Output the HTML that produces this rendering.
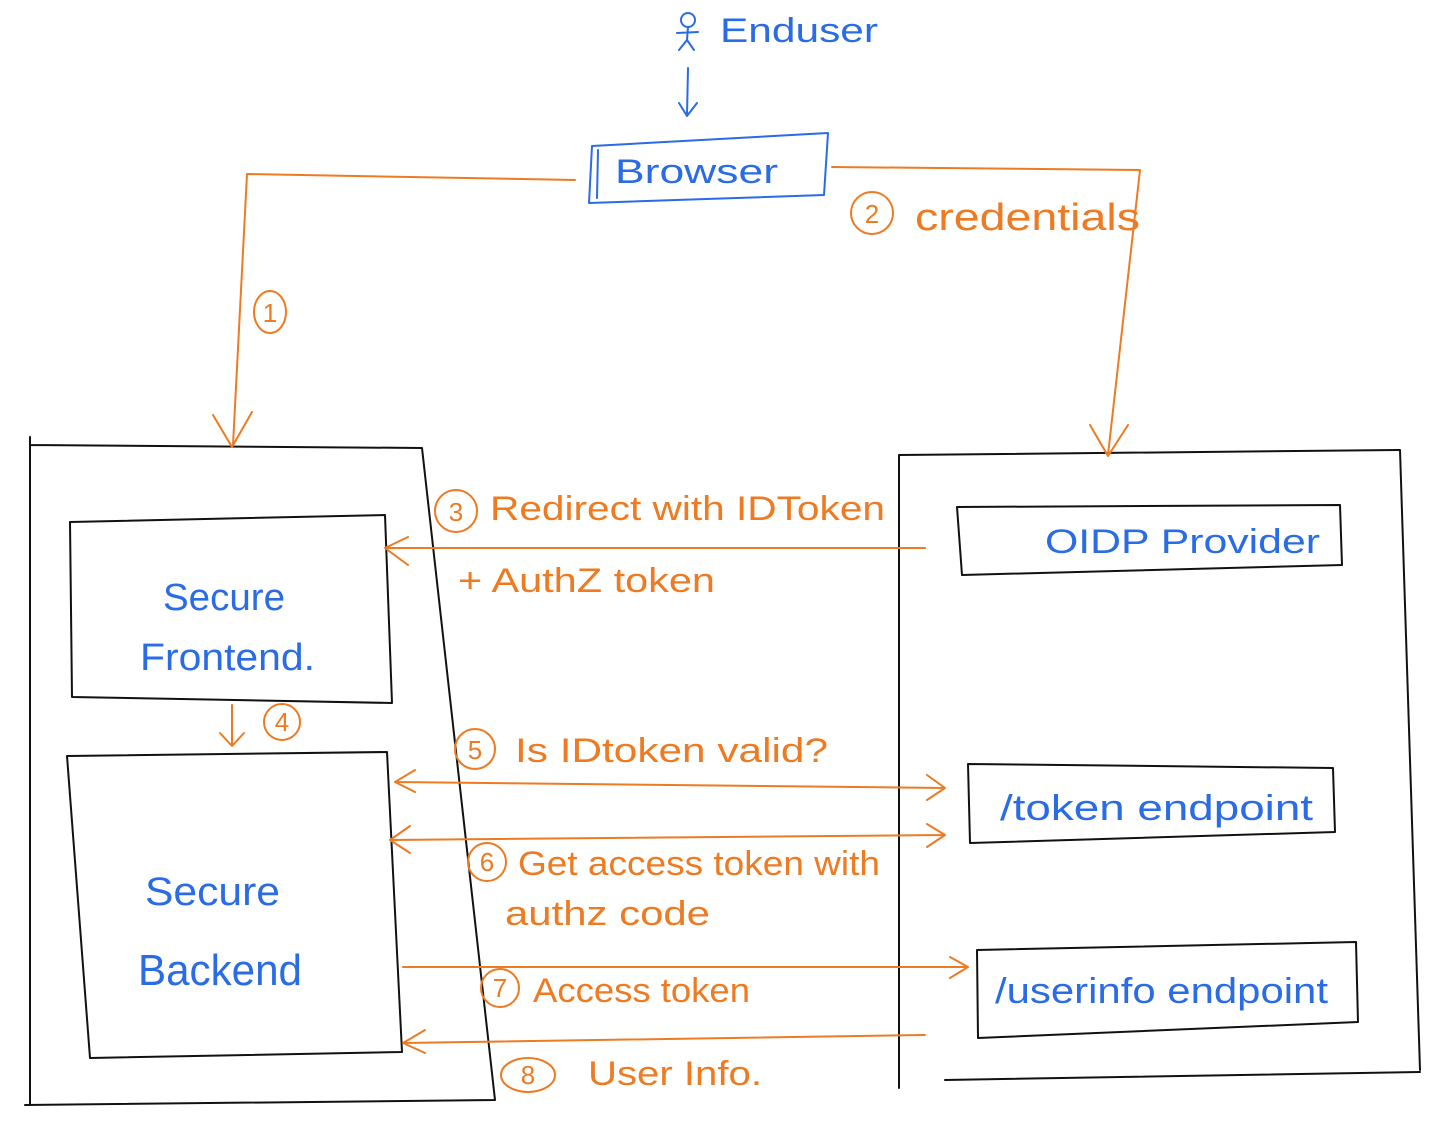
<!DOCTYPE html>
<html><head><meta charset="utf-8"><style>
html,body{margin:0;padding:0;background:#fff;}
svg{display:block;}
text{font-family:"Liberation Sans",sans-serif;}
.b{fill:#2a6be6;}
.o{fill:#ee7a22;}
</style></head><body>
<svg width="1430" height="1121" viewBox="0 0 1430 1121" xmlns="http://www.w3.org/2000/svg">
<g fill="none" stroke-linecap="round" stroke-linejoin="round">
<g stroke="#2a6be6" stroke-width="2">
<circle cx="688" cy="20" r="7"/>
<path d="M688 27 L687 40 M677 33 L698 32 M687 40 L679 50 M687 40 L694 50"/>
<path d="M688 68 L687 115 M679 103 L687 116 L697 103"/>
<path d="M592 146 L828 133 L824 195 L589 203 Z M598 150 L597 198"/>
</g>
<g stroke="#111" stroke-width="2">
<path d="M30 437 L30 1105 M30 445 L422 448 L495 1100 M25 1105 L495 1100"/>
<path d="M70 522 L385 515 L392 703 L72 697 Z"/>
<path d="M67 756 L387 752 L402 1052 L90 1058 Z"/>
<path d="M899 455 L899 1088 M899 455 L1400 450 L1420 1070 M945 1080 L1420 1072"/>
<path d="M957 507 L1340 505 L1342 565 L962 575 Z"/>
<path d="M968 764 L1333 768 L1335 832 L970 843 Z"/>
<path d="M977 950 L1356 942 L1358 1022 L978 1038 Z"/>
</g>
<g stroke="#ee7a22" stroke-width="2">
<path d="M575 180 L247 174 L233 445 M213 415 L232 447 L252 412"/>
<path d="M832 167 L1140 170 L1108 455 M1090 425 L1108 456 L1128 425"/>
<path d="M232 705 L232 745 M220 733 L232 746 L244 733"/>
<path d="M925 548 L385 548 M408 537 L385 548 L408 565"/>
<path d="M395 782 L945 788 M415 770 L395 782 L415 792 M927 775 L945 788 L927 800"/>
<path d="M390 840 L945 835 M410 826 L390 840 L410 853 M927 824 L945 835 L927 847"/>
<path d="M403 967 L968 967 M950 957 L968 967 L950 978"/>
<path d="M925 1035 L403 1043 M425 1030 L403 1043 L425 1053"/>
<ellipse cx="270" cy="312" rx="16" ry="21"/>
<circle cx="872" cy="213" r="21"/>
<circle cx="282" cy="722" r="18"/>
<circle cx="456" cy="511" r="21"/>
<circle cx="475" cy="749" r="20"/>
<circle cx="487" cy="862" r="19"/>
<circle cx="500" cy="988" r="19"/>
<ellipse cx="528" cy="1075" rx="27" ry="17"/>
</g>
</g>
<g class="o" font-size="26" text-anchor="middle">
<text x="270" y="322">1</text>
<text x="872" y="223">2</text>
<text x="282" y="731">4</text>
<text x="456" y="521">3</text>
<text x="475" y="759">5</text>
<text x="487" y="871">6</text>
<text x="500" y="997">7</text>
<text x="528" y="1084">8</text>
</g>
<text x="720" y="42" font-size="34" class="b" textLength="158" lengthAdjust="spacingAndGlyphs">Enduser</text>
<text x="615" y="183" font-size="34" class="b" textLength="163" lengthAdjust="spacingAndGlyphs">Browser</text>
<text x="915" y="230" font-size="38" class="o" textLength="225" lengthAdjust="spacingAndGlyphs">credentials</text>
<text x="163" y="610" font-size="38" class="b" textLength="122" lengthAdjust="spacingAndGlyphs">Secure</text>
<text x="140" y="670" font-size="38" class="b" textLength="175" lengthAdjust="spacingAndGlyphs">Frontend.</text>
<text x="145" y="905" font-size="40" class="b" textLength="135" lengthAdjust="spacingAndGlyphs">Secure</text>
<text x="138" y="985" font-size="44" class="b" textLength="164" lengthAdjust="spacingAndGlyphs">Backend</text>
<text x="1045" y="553" font-size="34" class="b" textLength="275" lengthAdjust="spacingAndGlyphs">OIDP  Provider</text>
<text x="1000" y="820" font-size="36" class="b" textLength="313" lengthAdjust="spacingAndGlyphs">/token  endpoint</text>
<text x="995" y="1003" font-size="36" class="b" textLength="333" lengthAdjust="spacingAndGlyphs">/userinfo  endpoint</text>
<text x="490" y="520" font-size="34" class="o" textLength="395" lengthAdjust="spacingAndGlyphs">Redirect  with  IDToken</text>
<text x="458" y="592" font-size="34" class="o" textLength="257" lengthAdjust="spacingAndGlyphs">+ AuthZ  token</text>
<text x="515" y="762" font-size="34" class="o" textLength="313" lengthAdjust="spacingAndGlyphs">Is  IDtoken  valid?</text>
<text x="518" y="875" font-size="34" class="o" textLength="362" lengthAdjust="spacingAndGlyphs">Get  access  token  with</text>
<text x="505" y="925" font-size="34" class="o" textLength="205" lengthAdjust="spacingAndGlyphs">authz  code</text>
<text x="533" y="1002" font-size="34" class="o" textLength="217" lengthAdjust="spacingAndGlyphs">Access  token</text>
<text x="588" y="1085" font-size="34" class="o" textLength="174" lengthAdjust="spacingAndGlyphs">User  Info.</text>
</svg>
</body></html>
